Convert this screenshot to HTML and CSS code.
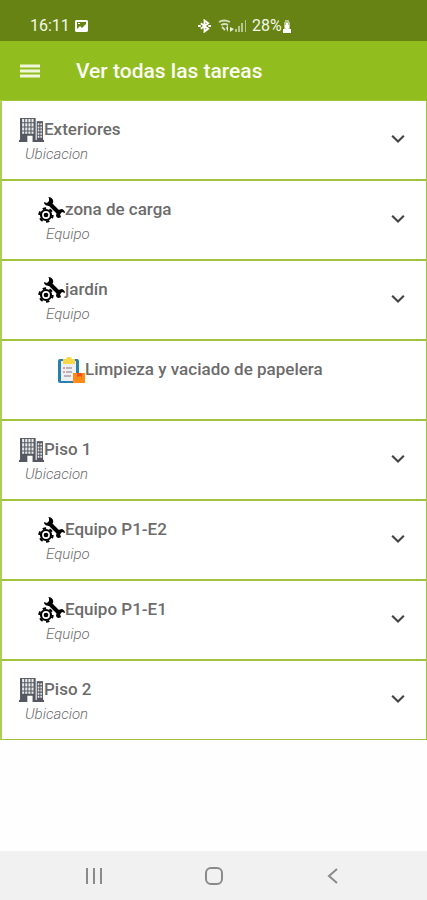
FILE: index.html
```html
<!DOCTYPE html>
<html lang="es">
<head>
    <meta charset="UTF-8">
    <meta name="viewport" content="width=device-width, initial-scale=1">
    <title>Ver todas las tareas</title>
    <link rel="stylesheet" href="styles.css">
</head>
<body>
    <!-- shared icons -->
    <svg class="sprite" aria-hidden="true">
        <symbol id="building" viewBox="0 0 24 24">
            <path fill="#555860" d="M1 1h15v22H1z"/>
            <path fill="#555860" d="M17 4h6v19h-6z"/>
            <path fill="#555860" d="M0 22h24v2H0z"/>
            <path fill="#e9eaec" d="M3 2h2v3H3zM6 2h2v3H6zM9 2h2v3H9zM12 2h2v3h-2zM3 6h2v3H3zM6 6h2v3H6zM9 6h2v3H9zM12 6h2v3h-2zM3 10h2v3H3zM6 10h2v3H6zM9 10h2v3H9zM12 10h2v3h-2zM3 14h2v2H3zM6 14h2v2H6zM9 14h2v2H9zM12 14h2v2h-2z"/>
            <path fill="#fff" d="M8 18h5v6H8z"/>
            <path fill="#e9eaec" d="M18 6h4v2h-4zM18 9h4v2h-4zM18 12h4v2h-4zM18 15h4v2h-4zM18 18h4v2h-4z"/>
            <path stroke="#555860" d="M20 5v16"/>
        </symbol>
        <symbol id="tools" viewBox="0 0 27 26">
            <path d="M11 6l11 11" stroke="#000" stroke-width="4"/>
            <path d="M10 0l1 1v3l-2 2-3-1c0 3 3 4 6 4l3-3c1-3-1-6-5-6zM18 18l2-5 4-1c2 1 3 2 3 4l-3-1-2 2 1 3-2 1c-2 0-3-1-3-3z"/>
            <circle cx="8" cy="18" r="5" fill="none" stroke="#000" stroke-width="2.2"/>
            <circle cx="8" cy="18" r="6.7" fill="none" stroke="#000" stroke-width="2" stroke-dasharray="3.5 3.5"/>
            <circle cx="8" cy="18" r="2.3"/>
        </symbol>
        <symbol id="task" viewBox="0 0 27 26">
            <rect x="0" y="2" width="21" height="24" rx="2" fill="#2a7fae"/>
            <path fill="#eef0f4" d="M3 4h15v20H3z"/>
            <path fill="#f8d849" d="M5 2h3c1-3 5-3 6 0h3v5H5z"/>
            <path stroke="#e77a78" stroke-width="1.4" d="M5 11h2M5 15h2"/>
            <path stroke="#85797f" stroke-width="1" d="M8 11h6M8 15h6M6 19h7"/>
            <path fill="#ff8b16" d="M15 16h12v10H15z"/>
            <path fill="#f4511e" d="M19 16h5v4l-2-1-3 1z"/>
        </symbol>
        <symbol id="chevron" viewBox="0 0 24 24">
            <path fill="none" stroke="#444" stroke-width="2.6" d="M5 8l7 7 7-7"/>
        </symbol>
    </svg>

    <div class="status-bar">
        <div class="status-left">
            <span>16:11</span>
            <svg width="13" height="12" viewBox="0 0 13 12"><path fill="#fff" fill-rule="evenodd" d="M1 0h11l1 1v10l-1 1H1l-1-1V1zM2 2v7l3-3 2 2 4-4V2zM3 3h2v1H3z"/></svg>
        </div>
        <div class="status-right">
            <svg width="13" height="14" viewBox="0 0 14 14"><path fill="none" stroke="#fff" stroke-width="2" d="M3 4l8 6-4 3V1l4 3-8 6"/><path fill="#fff" d="M0 6h3v2H0zM11 6h3v2h-3z"/></svg>
            <svg class="wifi" width="16" height="14" viewBox="0 0 16 14"><path fill="none" stroke="#d5dfbd" stroke-width="1.8" d="M1 3q5-3 11 0M3 6q4-2 7 0M4 8l3 3"/><path fill="#e9efdc" d="M8 9l2-3v7zM12 8v5l4-3z"/></svg>
            <svg class="signal" width="12" height="12" viewBox="0 0 12 12"><path fill="#b6c78b" d="M0 9h2v3H0zM3 6h2v6H3zM6 3h2v9H6zM10 0h1v12h-1z"/></svg>
            <span>28%</span>
            <svg class="battery" width="10" height="13" viewBox="0 0 10 13"><path fill="#b6c78b" d="M3 0h4v2h1v7H2V2h1z"/><path fill="#fff" d="M4 3h2v2h1v3L6 9h3v4H1V9h3L3 8V5h1z"/></svg>
        </div>
    </div>

    <header class="app-bar">
        <button class="menu-button" type="button" aria-label="Menú">
            <svg width="20" height="14" viewBox="0 0 20 14"><path stroke="#f0f6dc" stroke-width="3" d="M0 2h20M0 7h20M0 12h20"/></svg>
        </button>
        <h1>Ver todas las tareas</h1>
    </header>

    <main>
        <ul class="task-list">
            <li class="item level-1">
                <svg class="icon"><use href="#building"/></svg>
                <div class="info"><h2>Exteriores</h2><p>Ubicacion</p></div>
                <button class="expand" type="button" aria-label="Desplegar Exteriores"><svg><use href="#chevron"/></svg></button>
            </li>
            <li class="item level-2">
                <svg class="icon"><use href="#tools"/></svg>
                <div class="info"><h2>zona de carga</h2><p>Equipo</p></div>
                <button class="expand" type="button" aria-label="Desplegar zona de carga"><svg><use href="#chevron"/></svg></button>
            </li>
            <li class="item level-2">
                <svg class="icon"><use href="#tools"/></svg>
                <div class="info"><h2>jardín</h2><p>Equipo</p></div>
                <button class="expand" type="button" aria-label="Desplegar jardín"><svg><use href="#chevron"/></svg></button>
            </li>
            <li class="item level-3">
                <svg class="icon"><use href="#task"/></svg>
                <div class="info"><h2>Limpieza y vaciado de papelera</h2></div>
            </li>
            <li class="item level-1">
                <svg class="icon"><use href="#building"/></svg>
                <div class="info"><h2>Piso 1</h2><p>Ubicacion</p></div>
                <button class="expand" type="button" aria-label="Desplegar Piso 1"><svg><use href="#chevron"/></svg></button>
            </li>
            <li class="item level-2">
                <svg class="icon"><use href="#tools"/></svg>
                <div class="info"><h2>Equipo P1-E2</h2><p>Equipo</p></div>
                <button class="expand" type="button" aria-label="Desplegar Equipo P1-E2"><svg><use href="#chevron"/></svg></button>
            </li>
            <li class="item level-2">
                <svg class="icon"><use href="#tools"/></svg>
                <div class="info"><h2>Equipo P1-E1</h2><p>Equipo</p></div>
                <button class="expand" type="button" aria-label="Desplegar Equipo P1-E1"><svg><use href="#chevron"/></svg></button>
            </li>
            <li class="item level-1">
                <svg class="icon"><use href="#building"/></svg>
                <div class="info"><h2>Piso 2</h2><p>Ubicacion</p></div>
                <button class="expand" type="button" aria-label="Desplegar Piso 2"><svg><use href="#chevron"/></svg></button>
            </li>
        </ul>
    </main>

    <nav class="nav-bar">
        <button type="button" aria-label="Recientes"><svg width="18" height="18" viewBox="0 0 18 18"><path stroke="#8a8a8a" stroke-width="2" d="M2 1v16M9 1v16M16 1v16"/></svg></button>
        <button type="button" aria-label="Inicio"><svg width="18" height="18" viewBox="0 0 18 18"><rect x="1" y="1" width="16" height="16" rx="5" fill="none" stroke="#8a8a8a" stroke-width="2"/></svg></button>
        <button type="button" aria-label="Atrás"><svg width="18" height="18" viewBox="0 0 18 18"><path fill="none" stroke="#8a8a8a" stroke-width="2" d="M13 2L5 9l8 7"/></svg></button>
    </nav>
</body>
</html>
```
FILE: styles.css
```css
* { box-sizing: border-box; }
body { margin: 0; min-height: 100vh; display: flex; flex-direction: column; background: #fefefe; font-family: Roboto, sans-serif; }
h1, h2, p, ul { margin: 0; padding: 0; }
button { border: 0; padding: 0; background: none; display: flex; align-items: center; justify-content: center; cursor: pointer; }
svg { display: block; flex: none; }
.sprite { display: none; }

.status-bar { display: grid; grid-template-columns: 198px 1fr; height: 41px; padding-top: 11px; background: #668314; color: #f4f8e8; font-size: 16px; line-height: 28px; }
.status-left, .status-right { display: flex; align-items: center; }
.status-left { padding-left: 30px; gap: 5px; }
.wifi { margin-left: 7px; }
.signal { margin: 0 5px 0 1px; }

.app-bar { display: flex; align-items: center; height: 59px; padding: 0 20px; gap: 36px; background: #91be1e; color: #fbfdf4; }
.app-bar h1 { font-size: 21px; line-height: 28px; font-weight: 500; }

main { flex: 1; }
.task-list { list-style: none; }
.item { display: flex; align-items: flex-start; min-height: 80px; padding: 16px 16px 0 0; border: 1px solid #9fc43c; border-left: 2px solid #abcf56; background: #fff; }
.level-1 { padding-left: 17px; }
.level-2 { padding-left: 36px; }
.level-3 { padding-left: 56px; }
.icon { width: 27px; height: 26px; }
.level-1 .icon { width: 25px; height: 25px; }
.info { flex: 1; color: #6c6c6c; }
.info h2 { font-size: 17px; line-height: 24px; font-weight: 500; }
.info p { margin-left: -19px; font-size: 15px; line-height: 26px; font-style: italic; font-weight: 300; }
.expand { width: 24px; height: 44px; }
.expand svg { width: 20px; height: 20px; }

.nav-bar { display: flex; height: 49px; padding: 0 34px; background: #f1f1f1; }
.nav-bar button { flex: 1; }
```
